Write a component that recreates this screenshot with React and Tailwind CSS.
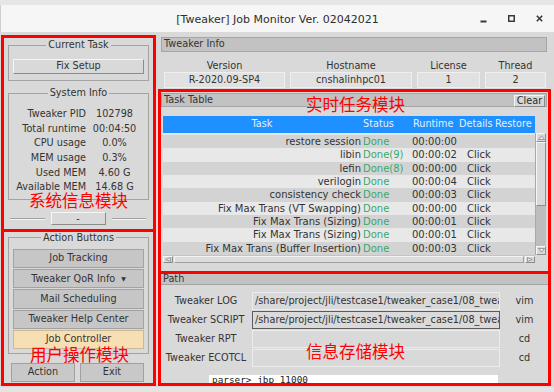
import React from "react";

const rows = [
  ["restore session", "Done", "00:00:00", ""],
  ["libin", "Done(9)", "00:00:02", "Click"],
  ["lefin", "Done(8)", "00:00:00", "Click"],
  ["verilogin", "Done", "00:00:04", "Click"],
  ["consistency check", "Done", "00:00:03", "Click"],
  ["Fix Max Trans (VT Swapping)", "Done", "00:00:00", "Click"],
  ["Fix Max Trans (Sizing)", "Done", "00:00:01", "Click"],
  ["Fix Max Trans (Sizing)", "Done", "00:00:01", "Click"],
  ["Fix Max Trans (Buffer Insertion)", "Done", "00:00:03", "Click"],
];

const sysInfo = [
  ["Tweaker PID", "102798"],
  ["Total runtime", "00:04:50"],
  ["CPU usage", "0.0%"],
  ["MEM usage", "0.3%"],
  ["Used MEM", "4.60 G"],
  ["Available MEM", "14.68 G"],
];

const actionButtons = [
  "Job Tracking",
  "Tweaker QoR Info",
  "Mail Scheduling",
  "Tweaker Help Center",
];

const paths = [
  ["Tweaker LOG", "/share/project/jli/testcase1/tweaker_case1/08_tweaker/log", "vim", false],
  ["Tweaker SCRIPT", "/share/project/jli/testcase1/tweaker_case1/08_tweaker/script", "vim", true],
  ["Tweaker RPT", "", "cd", false],
  ["Tweaker ECOTCL", "", "cd", false],
];

const raised =
  "border border-t-[#f6f6f6] border-l-[#f6f6f6] border-r-[#8c8c8c] border-b-[#8c8c8c] bg-[#d9d9d9]";

function Groove() {
  return <div className="flex-1 border-t border-t-[#9f9f9f] border-b border-b-[#f4f4f4] h-[2px]" />;
}

export default function App() {
  return (
    <div className="relative w-[554px] h-[392px] overflow-hidden bg-[#d9d9d9] flex flex-col font-['DejaVu_Sans',sans-serif] text-[9.7px] text-[#333]">
      {/* top strip */}
      <div className="h-[5px] shrink-0 bg-[#e6e6e6]" />
      {/* title bar */}
      <div className="h-[27px] shrink-0 bg-[#f6f6f6] border-l border-l-[#cfcfcf] grid grid-cols-[1fr_auto_1fr] items-center">
        <div />
        <div className="text-[11px] text-[#2e2e2e] leading-none pt-[1px]">[Tweaker] Job Monitor Ver. 02042021</div>
        <div className="flex justify-end items-center gap-[21px] pr-[11px]">
          <svg width="7" height="8" viewBox="0 0 7 8">
            <rect x="0.5" y="5.5" width="6" height="2" fill="#3a3a3a" />
          </svg>
          <svg width="7" height="7" viewBox="0 0 7 7">
            <rect x="0.75" y="0.75" width="5.5" height="5.5" fill="none" stroke="#3a3a3a" strokeWidth="1.5" />
          </svg>
          <svg width="7" height="7" viewBox="0 0 7 7">
            <path d="M0.8 0.8 L6.2 6.2 M6.2 0.8 L0.8 6.2" stroke="#3a3a3a" strokeWidth="1.6" />
          </svg>
        </div>
      </div>

      {/* main */}
      <div className="flex-1 flex gap-[2px] pl-[1px] pt-[3px]">
        {/* left column */}
        <div className="w-[155px] flex flex-col">
          {/* system info box */}
          <div className="h-[197px] border-[3px] border-[#ff0000] flex flex-col">
            <fieldset className="mx-[4px] mt-[1px] h-[42px] border border-[#a3a3a3]">
              <legend className="mx-auto px-[2px] leading-[12px]">Current Task</legend>
              <div className={`mx-[4px] mt-[8px] h-[15px] flex items-center justify-center ${raised}`}>Fix Setup</div>
            </fieldset>
            <fieldset className="mx-[4px] mt-[6px] h-[113px] border border-[#a3a3a3]">
              <legend className="mx-auto px-[2px] leading-[12px]">System Info</legend>
              <div className="pt-[8px] grid grid-cols-[77px_49px] gap-x-[4px]">
                {sysInfo.map(([k, v]) => (
                  <React.Fragment key={k}>
                    <div className="h-[14.7px] leading-[14.7px] text-right whitespace-nowrap">{k}</div>
                    <div className="h-[14.7px] leading-[14.7px] text-center whitespace-nowrap">{v}</div>
                  </React.Fragment>
                ))}
              </div>
            </fieldset>
            <div className="mt-[12px] h-[13px] flex items-center pl-[6px] pr-[7px] gap-[6px]">
              <Groove />
              <div className={`w-[55px] h-[13px] flex items-center justify-center leading-none ${raised}`}>-</div>
              <Groove />
            </div>
          </div>
          {/* action box */}
          <div className="h-[154px] border-[3px] border-t-0 border-[#ff0000] flex flex-col">
            <fieldset className="mx-[4px] h-[122px] border border-[#a3a3a3]">
              <legend className="mx-auto px-[2px] leading-[11px]">Action Buttons</legend>
              <div className="pt-[6px] px-[4px] flex flex-col gap-[1px]">
                {actionButtons.map((b) => (
                  <div key={b} className="h-[19.2px] flex items-center justify-center gap-[6px] bg-[#c6c6c6] border border-[#a2a2a2]">
                    <span>{b}</span>
                    {b === "Tweaker QoR Info" && <span className="text-[6px]">▼</span>}
                  </div>
                ))}
                <div className="h-[19.2px] flex items-center justify-center bg-[#f7dfb4] border border-[#c9b99a]">Job Controller</div>
              </div>
            </fieldset>
            <div className="mt-[9px] flex gap-[5px] pl-[7px]">
              <div className="w-[64px] h-[19px] flex items-center justify-center bg-[#c8c8c8] border border-[#a0a0a0]">Action</div>
              <div className="w-[64px] h-[19px] flex items-center justify-center bg-[#c8c8c8] border border-[#a0a0a0]">Exit</div>
            </div>
          </div>
        </div>

        {/* right column */}
        <div className="w-[393px] flex flex-col">
          {/* tweaker info */}
          <div className="h-[54px] flex flex-col">
            <div className="mt-[2px] ml-[3px] mr-[4px] h-[15px] bg-[#c2c2c2] border border-[#a5a5a5] flex items-center pl-[2px]">Tweaker Info</div>
            <div className="ml-[6px] mt-[8px] grid grid-cols-[121px_122px_63px_61px] gap-x-[5px]">
              {["Version", "Hostname", "License", "Thread"].map((l) => (
                <div key={l} className="h-[12px] leading-[12px] text-center">{l}</div>
              ))}
              {["R-2020.09-SP4", "cnshalinhpc01", "1", "2"].map((v) => (
                <div key={v} className="h-[16px] flex items-center justify-center bg-[#e1e1e1] border border-[#efefef]">{v}</div>
              ))}
            </div>
          </div>

          {/* task table */}
          <div className="h-[185px] border-[3px] border-[#ff0000] flex flex-col">
            <div className="mt-[1px] mr-[1px] h-[14px] bg-[#c2c2c2] border border-[#a5a5a5] flex items-center justify-between pl-[2px] pr-[1px] pt-[1px]">
              <span>Task Table</span>
              <div className={`w-[31px] h-[12px] flex items-center justify-center leading-none bg-[#d6d6d6] border border-t-[#f4f4f4] border-l-[#f4f4f4] border-r-[#8a8a8a] border-b-[#8a8a8a] text-[#2a2a2a]`}>Clear</div>
            </div>
            <div className="ml-[2px] mt-[9px] flex">
              <div className="w-[372px] flex flex-col">
                <div className="h-[17px] bg-[#1e90ff] text-[#e6f1fc] grid grid-cols-[198px_48px_49px_34px_43px] items-center whitespace-nowrap">
                  <div className="text-center">Task</div>
                  <div className="pl-[2px]">Status</div>
                  <div className="pl-[4px]">Runtime</div>
                  <div className="pl-[1px]">Details</div>
                  <div className="pl-[3px]">Restore</div>
                </div>
                <div className="h-[2px] bg-[#e6e6e6]" />
                {rows.map((r, i) => (
                  <div
                    key={i}
                    className={`h-[13.33px] leading-[13.33px] text-[10px] grid grid-cols-[198px_48px_50px_33px_43px] whitespace-nowrap ${i % 2 === 0 ? "bg-[#d3d3d3]" : "bg-[#e8e8e8]"}`}
                  >
                    <div className="text-right pr-[0px]">{r[0]}</div>
                    <div className="pl-[2px] text-[#3aa86c]">{r[1]}</div>
                    <div className="pl-[3px]">{r[2]}</div>
                    <div className="pl-[8px]">{r[3]}</div>
                    <div />
                  </div>
                ))}
                {/* horizontal scrollbar */}
                <div className="h-[8px] flex bg-[#d9d9d9] border-t border-t-[#c4c4c4]">
                  <div className={`w-[10px] h-full flex items-center justify-center ${raised}`}>
                    <svg width="6" height="5" viewBox="0 0 6 5"><path d="M5.5 0.5 L0.8 2.5 L5.5 4.5 Z" fill="#e6e6e6" stroke="#8a8a8a" strokeWidth="0.8" /></svg>
                  </div>
                  <div className="flex-1 mx-[1px] bg-[#dcdcdc] border border-t-[#f2f2f2] border-l-[#f2f2f2] border-r-[#a0a0a0] border-b-[#a0a0a0]" />
                  <div className={`w-[10px] h-full flex items-center justify-center ${raised}`}>
                    <svg width="6" height="5" viewBox="0 0 6 5"><path d="M0.5 0.5 L5.2 2.5 L0.5 4.5 Z" fill="#e6e6e6" stroke="#8a8a8a" strokeWidth="0.8" /></svg>
                  </div>
                </div>
              </div>
              <div className="w-[11px] flex flex-col">
                <div className="h-[17px]" />
                <div className="h-[122px] flex flex-col bg-[#bdbdbd] border-l border-l-[#a8a8a8]">
                  <div className={`h-[9px] flex items-center justify-center ${raised}`}>
                    <svg width="7" height="5" viewBox="0 0 7 5"><path d="M0.5 4.5 L3.5 0.8 L6.5 4.5 Z" fill="#e6e6e6" stroke="#8a8a8a" strokeWidth="0.8" /></svg>
                  </div>
                  <div className={`h-[64px] ${raised}`} />
                  <div className="flex-1" />
                  <div className={`h-[9px] flex items-center justify-center ${raised}`}>
                    <svg width="7" height="5" viewBox="0 0 7 5"><path d="M0.5 0.5 L3.5 4.2 L6.5 0.5 Z" fill="#e6e6e6" stroke="#8a8a8a" strokeWidth="0.8" /></svg>
                  </div>
                </div>
              </div>
            </div>
          </div>

          {/* path */}
          <div className="h-[112px] border-[3px] border-t-0 border-[#ff0000] flex flex-col overflow-hidden">
            <div className="h-[11px] shrink-0 bg-[#c2c2c2] border-b border-[#a5a5a5] flex items-center pl-[2px]">Path</div>
            <div className="mt-[7px] grid grid-cols-[90px_249px_48px] gap-y-[1px] items-center">
              {paths.map(([label, val, act, focus]) => (
                <React.Fragment key={label}>
                  <div className="text-center whitespace-nowrap">{label}</div>
                  <div
                    className={`h-[18px] ml-[1px] overflow-hidden flex items-center pl-[2px] ${
                      focus ? "border border-[#5c5c5c] bg-[#dadada]" : "border border-[#ececec] bg-[#d9d9d9]"
                    }`}
                  >
                    <span className="block w-[244px] overflow-hidden whitespace-nowrap">{val}</span>
                  </div>
                  <div className="text-center pl-[1px]">{act}</div>
                </React.Fragment>
              ))}
            </div>
            <div className="mt-[8px] ml-[48px] w-[289px] h-[14px] shrink-0 bg-white pl-[3px] leading-[10px] font-['DejaVu_Sans_Mono',monospace] text-[9.4px] text-[#222]">
              parser&gt; jbp 11000
            </div>
          </div>
        </div>
      </div>
      <div className="h-[5px] shrink-0 bg-[#e4e4e4]" />

      {/* annotations */}
      <div className="absolute left-[29px] top-[192px] text-[16.5px] leading-[17px] text-[#ff0000] font-['Noto_Sans_CJK_SC',sans-serif]">系统信息模块</div>
      <div className="absolute left-[30px] top-[346px] text-[16.5px] leading-[17px] text-[#ff0000] font-['Noto_Sans_CJK_SC',sans-serif]">用户操作模块</div>
      <div className="absolute left-[306px] top-[96px] text-[16.5px] leading-[17px] text-[#ff0000] font-['Noto_Sans_CJK_SC',sans-serif]">实时任务模块</div>
      <div className="absolute left-[306px] top-[343px] text-[16.5px] leading-[17px] text-[#ff0000] font-['Noto_Sans_CJK_SC',sans-serif]">信息存储模块</div>
    </div>
  );
}
